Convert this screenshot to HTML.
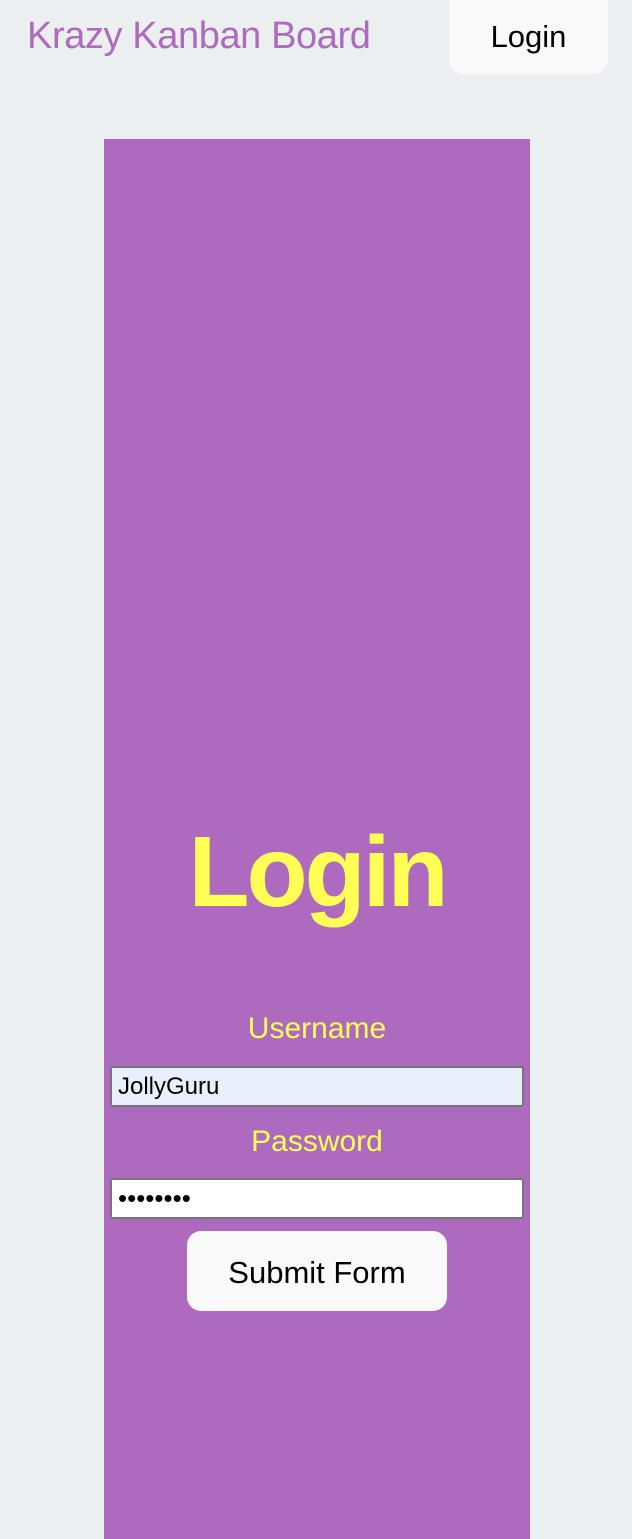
<!DOCTYPE html>
<html><head><meta charset="utf-8"><style>
*{margin:0;padding:0;box-sizing:border-box}
body{width:632px;height:1530px;background:#ebeff0;position:relative;overflow:hidden;font-family:"Liberation Sans",sans-serif}
.a{position:absolute}
#title{left:27px;top:15px;font-size:38px;color:#ae6abf;letter-spacing:-0.4px;white-space:nowrap}
#lb{left:449px;top:-10px;width:159px;height:84px;background:#f9f9f9;border-radius:14px;font-size:31px;display:flex;align-items:center;justify-content:center;padding-top:10px;color:#000}
#panel{left:104px;top:139px;width:426px;height:1400px;background:#ae6abf}
.c{left:104px;width:426px;text-align:center;color:#ffff55}
#h{top:815px;font-size:100px;font-weight:bold;letter-spacing:-3px}
.l{font-size:30px}
.in{left:110px;width:414px;height:41px;border:2px solid #767676;border-radius:3px;font-size:24px;padding-left:6px;line-height:37px;color:#000}
#sb{left:187px;top:1231px;width:260px;height:80px;background:#f9f9f9;border-radius:14px;font-size:31px;display:flex;align-items:center;justify-content:center;padding-top:3px}
</style></head><body>
<div class="a" id="title">Krazy Kanban Board</div>
<div class="a" id="lb">Login</div>
<div class="a" id="panel"></div>
<div class="a c" id="h">Login</div>
<div class="a c l" style="top:1012px">Username</div>
<div class="a in" style="top:1066px;background:#e8f0fe">JollyGuru</div>
<div class="a c l" style="top:1125px">Password</div>
<div class="a in" style="top:1178px;background:#fff;font-size:26px;letter-spacing:0px">••••••••</div>
<div class="a" id="sb">Submit Form</div>
</body></html>
